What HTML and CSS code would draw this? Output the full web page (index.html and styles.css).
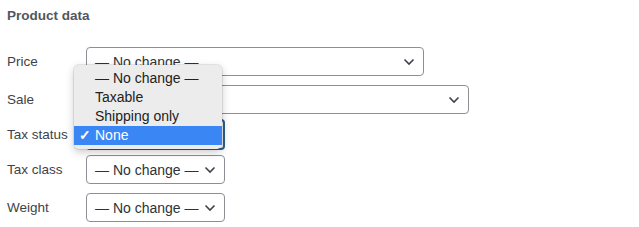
FILE: index.html
```html
<!DOCTYPE html>
<html lang="en">
<head>
    <meta charset="UTF-8">
    <title>Product data</title>
    <link rel="stylesheet" href="styles.css">
</head>
<body>
    <div class="panel">
        <h4 class="title">Product data</h4>

        <div class="row row-price">
            <span class="label">Price</span>
            <div class="select wide">
                <span>— No change —</span>
                <svg class="chev" width="12" height="8" viewBox="0 0 12 8"><path d="M1.5 1.5 L6 6 L10.5 1.5" fill="none" stroke="#3c434a" stroke-width="1.6"/></svg>
            </div>
        </div>

        <div class="row row-sale">
            <span class="label">Sale</span>
            <div class="select wider">
                <span>— No change —</span>
                <svg class="chev" width="12" height="8" viewBox="0 0 12 8"><path d="M1.5 1.5 L6 6 L10.5 1.5" fill="none" stroke="#3c434a" stroke-width="1.6"/></svg>
            </div>
        </div>

        <div class="row row-tax">
            <span class="label">Tax status</span>
            <div class="select focused">
                <span>None</span>
                <svg class="chev" width="12" height="8" viewBox="0 0 12 8"><path d="M1.5 1.5 L6 6 L10.5 1.5" fill="none" stroke="#3c434a" stroke-width="1.6"/></svg>
            </div>
        </div>

        <div class="row row-class">
            <span class="label">Tax class</span>
            <div class="select">
                <span>— No change —</span>
                <svg class="chev" width="12" height="8" viewBox="0 0 12 8"><path d="M1.5 1.5 L6 6 L10.5 1.5" fill="none" stroke="#3c434a" stroke-width="1.6"/></svg>
            </div>
        </div>

        <div class="row">
            <span class="label">Weight</span>
            <div class="select">
                <span>— No change —</span>
                <svg class="chev" width="12" height="8" viewBox="0 0 12 8"><path d="M1.5 1.5 L6 6 L10.5 1.5" fill="none" stroke="#3c434a" stroke-width="1.6"/></svg>
            </div>
        </div>

        <ul class="menu">
            <li>— No change —</li>
            <li>Taxable</li>
            <li>Shipping only</li>
            <li class="active"><span class="tick">✓</span>None</li>
        </ul>
    </div>
</body>
</html>
```

FILE: styles.css
```css
body {
    margin: 0;
    background: #fff;
    font-family: "Liberation Sans", Arial, sans-serif;
    color: #3c434a;
}
.panel {
    position: relative;
    padding: 7px 7px 0 7px;
}
.title {
    margin: 0 0 22px 0;
    font-size: 13.5px;
    font-weight: bold;
    color: #50575e;
    line-height: 18px;
}
.row {
    display: flex;
    align-items: center;
}
.row-price { margin-bottom: 9px; }
.row-sale { margin-bottom: 5px; }
.row-tax { margin-bottom: 5px; }
.row-class { margin-bottom: 9px; }
.label {
    width: 79px;
    font-size: 13.5px;
    color: #3c434a;
}
.select {
    box-sizing: border-box;
    width: 139px;
    height: 29px;
    border: 1px solid #8c8f94;
    border-radius: 4px;
    background: #fff;
    display: flex;
    align-items: center;
    justify-content: space-between;
    padding: 0 8px 0 8px;
    font-size: 14px;
    color: #2c3338;
}
.select.wide { width: 338px; }
.select.wider { width: 383px; }
.select.focused {
    height: 31px;
    border: 2px solid #2f5e86;
    padding-left: 7px;
    padding-right: 7px;
}
.chev {
    flex: none;
    margin-top: 1px;
}
.menu {
    position: absolute;
    left: 74px;
    top: 65px;
    width: 148px;
    margin: 0;
    padding: 4px 0 4px 0;
    list-style: none;
    background: #ececec;
    border-radius: 5px;
    box-shadow: 0 0 0 1px rgba(0, 0, 0, 0.08), 0 3px 8px rgba(0, 0, 0, 0.22);
    font-size: 14px;
    color: #222;
}
.menu li {
    height: 19px;
    line-height: 19px;
    padding-left: 21px;
    position: relative;
}
.menu li.active {
    background: #3a86f5;
    color: #fff;
}
.tick {
    position: absolute;
    left: 5px;
    top: 0;
    font-size: 14px;
    font-weight: bold;
}
```
